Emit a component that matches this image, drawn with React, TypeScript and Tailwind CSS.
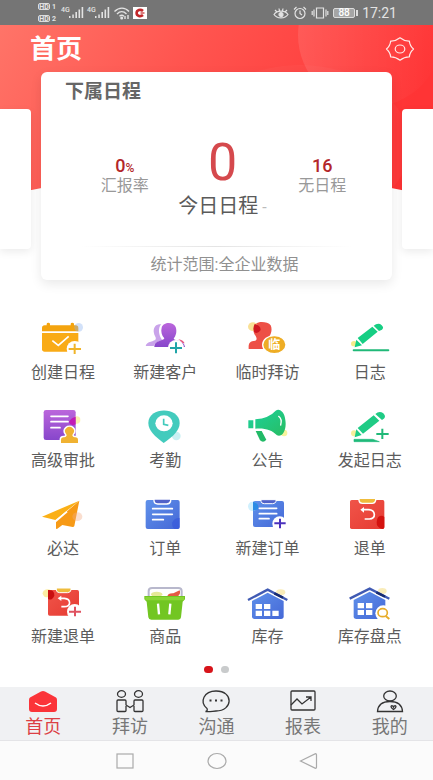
import type { ReactNode } from "react";

const FONT = "font-['Roboto','Noto_Sans_CJK_SC',sans-serif]";

function StatusBar() {
  return (
    <div className="flex h-[25px] items-center bg-[#757575] pr-9 pl-[38px] text-[#e3e3e3]">
      <div className="flex flex-col gap-[3px]">
        {["1", "2"].map((n) => (
          <div key={n} className="flex h-[9px] items-center gap-[2px] text-[8px] leading-[8px]">
            <span className="flex h-[7px] w-3 items-center justify-center rounded-[2px] border border-[#dcdcdc] text-[7px] font-bold">HD</span>
            <span className="w-[5px] text-[7px] font-bold">{n}</span>
          </div>
        ))}
      </div>
      {["a", "b"].map((k, i) => (
        <div key={k} className={i === 0 ? "ml-1 flex items-end" : "ml-[3px] flex items-end"}>
          <span className="mb-[5px] w-2 text-[7px] leading-[8px] font-medium">4G</span>
          <svg viewBox="0 0 15 13" className="h-[13px] w-[15px]" fill="currentColor">
            <path d="M0 10h1.500v2H0zM3.300 8.500h1.500V12h-1.500zM6.400 6h1.600v6h-1.600zM9.500 3.500h1.600V12h-1.600zM12.600 1h1.600v11h-1.600z" />
          </svg>
        </div>
      ))}
      <svg viewBox="0 0 18 14" className="ml-[3px] h-[14px] w-[18px]" fill="none" stroke="currentColor" strokeWidth="1.400">
        <path d="M1.500 5.500C6 1 12 1 16 5.500M4 8c3-3 6.500-3 9.500 0M6.500 10.200c1.500-1.400 3-1.400 4.500 0" />
        <circle cx="8.700" cy="12" r=".8" fill="currentColor" />
        <path d="M12 10v3M15 9v4" />
      </svg>
      <svg viewBox="0 0 14 12" className="ml-[2px] h-3 w-[14px]">
        <path d="M0 0h14v12H0z" fill="#fff" />
        <path d="M10 4C7.500 1.800 3.600 3 3.600 6S7.500 10.200 10 8" fill="none" stroke="#c3282b" strokeWidth="2.600" />
        <path d="M7.500 6h4" stroke="#c3282b" strokeWidth="1.200" />
      </svg>
      <div className="ml-auto flex items-center">
        <svg viewBox="0 0 16 14" className="h-[14px] w-4" fill="none" stroke="currentColor" strokeWidth="1.200">
          <path d="M1 8.500C4 4 12 4 15 8.500 12 13 4 13 1 8.500ZM2 4l2 2M6 2.500 6.500 5M10 2.500 9.500 5M14 4l-2 2" />
          <circle cx="8" cy="8.500" r="2" fill="currentColor" />
        </svg>
        <svg viewBox="0 0 14 14" className="ml-1 h-[14px] w-[14px]" fill="none" stroke="currentColor" strokeWidth="1.200">
          <circle cx="7" cy="7.500" r="5" />
          <path d="M7 4.500v3l2 1.500M1 3.500 3.500 1M13 3.500 10.500 1" />
        </svg>
        <svg viewBox="0 0 18 14" className="ml-1 h-[14px] w-[18px]" fill="none" stroke="currentColor" strokeWidth="1.200">
          <path d="M5.500 2h7v10h-7zM3 3.500v7M1.200 5v4M15 3.500v7M16.800 5v4" />
        </svg>
        <div className="ml-1 flex h-[10px] w-[22px] items-center justify-center rounded-[2px] border border-[#dcdcdc] bg-[#a5a5a5] text-[10px] leading-[10px] font-medium text-white">88</div>
        <div className="ml-px h-[6px] w-[2px] bg-[#dcdcdc]" />
        <span className="ml-1 text-sm leading-[18px]">17:21</span>
      </div>
    </div>
  );
}

function HeaderBackdrop() {
  return (
    <svg viewBox="0 0 433 175" preserveAspectRatio="none" className="absolute inset-x-0 top-0 h-[175px] w-full" aria-hidden="true">
      <defs>
        <linearGradient id="hero" x1="0" y1="0" x2="1" y2=".25">
          <stop offset="0" stopColor="#ff7468" />
          <stop offset=".45" stopColor="#ff544f" />
          <stop offset="1" stopColor="#ff3435" />
        </linearGradient>
        <linearGradient id="bubble" x1="0" y1="0" x2="1" y2="0">
          <stop offset="0" stopColor="#fff" stopOpacity=".1" />
          <stop offset="1" stopColor="#fff" stopOpacity="0" />
        </linearGradient>
        <clipPath id="arch">
          <path d="M0 0H433V172Q216 120 0 172Z" />
        </clipPath>
      </defs>
      <g clipPath="url(#arch)">
        <path d="M0 0h433v175H0z" fill="url(#hero)" />
        <circle cx="370" cy="10" r="72" fill="url(#bubble)" />
        <ellipse cx="300" cy="120" rx="110" ry="80" fill="#fff" opacity=".03" />
      </g>
    </svg>
  );
}

function SideCard({ side }: { side: "left" | "right" }) {
  return (
    <div
      className={
        side === "left"
          ? "mt-[37px] h-[140px] w-[31px] shrink-0 rounded-r-[4px] bg-white shadow-[0_3px_8px_rgba(0,0,0,0.08)]"
          : "mt-[37px] h-[140px] w-[31px] shrink-0 rounded-l-[4px] bg-white shadow-[0_3px_8px_rgba(0,0,0,0.08)]"
      }
    />
  );
}

function SummaryCard() {
  return (
    <section className="flex h-[208px] flex-1 flex-col rounded-[6px] bg-white shadow-[0_4px_12px_rgba(0,0,0,0.09)]">
      <h2 className="mt-2 ml-6 text-[19px] leading-6 font-bold text-[#666]">下属日程</h2>
      <div className="mt-[30px] grid grid-cols-[1fr_96px_1fr] px-9">
        <div className="flex flex-col items-center pt-[22px] pl-1">
          <p className="text-lg leading-5 font-medium text-[#b3262a]">
            0<span className="text-xs">%</span>
          </p>
          <p className="text-base leading-5 whitespace-nowrap text-[#999]">汇报率</p>
        </div>
        <div className="flex flex-col items-center pl-3">
          <p className="text-[52px] leading-[58px] text-[#d5494d]">0</p>
          <p className="text-xl leading-7 whitespace-nowrap text-[#5a5a5a]">
            今日日程<span className="ml-1 text-base text-[#bbb]">-</span>
          </p>
        </div>
        <div className="flex flex-col items-center pt-[22px] pl-6">
          <p className="text-lg leading-5 font-medium text-[#b3262a]">16</p>
          <p className="text-base leading-5 whitespace-nowrap text-[#999]">无日程</p>
        </div>
      </div>
      <div className="mx-10 mt-auto h-px bg-linear-to-r from-white via-[#e4e4e4] to-white" />
      <p className="pt-[6px] pb-[3px] pl-4 text-center text-base leading-6 text-[#909090]">统计范围:全企业数据</p>
    </section>
  );
}

type Tile = { label: string; box: string; art: ReactNode };

const tiles: Tile[] = [
  {
    label: "创建日程",
    box: "57 24 144 120",
    art: (
      <>
        <path d="M66 64V54q0-8 8-8h6v-4q0-4 5-4t5 4v4h62v-4q0-4 5-4t5 4v4h5q8 0 8 8v10Z" fill="#f4a40f" />
        <path d="M66 69h109v49q0 7-8 7H74q-8 0-8-7Z" fill="#f9ab16" />
        <circle cx="176" cy="52" r="13" fill="#8fb4ef" opacity=".4" />
        <path d="m97 92 18 14 31-27" fill="none" stroke="#fff" strokeWidth="5" />
        <circle cx="164" cy="117" r="24" fill="#fff" />
        <path d="M164 101v31M146 117h37" stroke="#f0b429" strokeWidth="6" />
      </>
    ),
  },
  {
    label: "新建客户",
    box: "364 24 144 120",
    art: (
      <>
        <path d="M418 43c-13 2-18 14-15 27 2 10 7 12 5 18-2 7-28 6-30 20h24c4-14 20-13 25-19-9-11-14-35-2-46Z" fill="#c9a3ea" />
        <path d="M404 111c-2-19 28-18 30-26-8-9-11-21-8-32 4-18 35-19 42-2 5 15 0 27-6 35 3 6 32 4 34 25Z" fill="url(#violet)" />
        <circle cx="469" cy="114" r="24" fill="#fff" />
        <path d="M476 88q14 2 19 12l-6-1q-6-6-13-11Z" fill="#e5547b" />
        <path d="M469 97v33M451 114h36" stroke="#20a5a8" strokeWidth="6" />
      </>
    ),
  },
  {
    label: "临时拜访",
    box: "71 24 144 120",
    art: (
      <>
        <path d="M85 117c-1-19 3-23 20-25 6-2 4-9 1-14-10-14-9-29 1-37 9-8 36-6 44 5 6 13 1 27-7 38-10 7-18 19-12 33Z" fill="#ed5046" />
        <ellipse cx="98" cy="50" rx="15" ry="13" fill="#f7d87a" opacity=".8" />
        <path d="M103 42q18 4 18 18-10 15-20 5-4-12 2-23Z" fill="#cf1720" />
        <ellipse cx="162" cy="104" rx="35" ry="27" fill="#eead25" stroke="#fff" strokeWidth="4" />
        <text x="162" y="117" textAnchor="middle" fill="#fff" fontSize="36" fontWeight="700">临</text>
      </>
    ),
  },
  {
    label: "日志",
    box: "378 24 144 120",
    art: (
      <>
        <ellipse cx="402" cy="101" rx="9" ry="8" fill="#f2e35a" opacity=".7" />
        <path d="m404 112 5-23 17 17ZM413 84l44-34 16 15-45 37ZM461 47l7-4q10-4 17 3 8 7 1 13l-9 4Z" fill="#16ce83" />
        <path d="M401 121h104" stroke="#20b978" strokeWidth="6" strokeLinecap="round" />
      </>
    ),
  },
  {
    label: "高级审批",
    box: "57 33 144 120",
    art: (
      <>
        <rect x="71" y="45" width="96" height="90" rx="7" fill="url(#violet)" />
        <circle cx="170" cy="75" r="11" fill="#f5e77c" opacity=".6" />
        <path d="M167 65v23q-15 8-20-6 5-14 20-17Z" fill="#c21ab5" />
        <path d="M93 64h51M93 80h51M93 98h27" stroke="#fff" strokeWidth="5" strokeLinecap="round" />
        <path d="M123 144v-9q0-8 8-8h2c7-3 9-6 5-11a14 12 0 1 1 21 0c-4 5-2 8 5 11h2q8 0 8 8v9Z" fill="#f0b232" stroke="#fff" strokeWidth="9" paintOrder="stroke" />
      </>
    ),
  },
  {
    label: "考勤",
    box: "364 33 144 120",
    art: (
      <>
        <circle cx="470" cy="123" r="13" fill="#b3e9ee" opacity=".7" />
        <path d="M432 144C405 124 386 106 386 84c0-50 94-50 94 0 0 22-19 40-48 60Z" fill="#43cbbd" />
        <ellipse cx="433" cy="85" rx="26" ry="24" fill="#fff" />
        <path d="M432 71v17l14 3" fill="none" stroke="#43cbbd" strokeWidth="5" />
      </>
    ),
  },
  {
    label: "公告",
    box: "71 33 144 120",
    art: (
      <>
        <circle cx="191" cy="114" r="10" fill="#f3ef73" opacity=".7" />
        <path d="M84 76h15v24H84ZM105 73q42-4 61-26c12-9 27 5 29 28 5 31-10 53-25 46-16-16-34-22-65-20Z" fill="url(#green)" />
        <path d="M106 108h18l14 26q-9 11-19 2Z" fill="#22ba67" />
        <path d="M175 64q11 8 6 26" fill="none" stroke="#fff" strokeWidth="4" strokeLinecap="round" />
      </>
    ),
  },
  {
    label: "发起日志",
    box: "378 33 144 120",
    art: (
      <>
        <circle cx="402" cy="115" r="9" fill="#f2e35a" opacity=".6" />
        <path d="m404 127 5-24 16 17ZM413 99l48-38 17 16-49 39ZM466 57q12-11 24-2 12 12-4 20Z" fill="#1fcb85" />
        <path d="M402 133h56l20 7h-76Z" fill="#20b978" stroke="#20bd80" strokeWidth="2" />
        <path d="M487 101v31M469 117h37" stroke="#20b978" strokeWidth="6" />
      </>
    ),
  },
  {
    label: "必达",
    box: "57 27 144 120",
    art: (
      <>
        <path d="m66 95 112-48-72 58Z" fill="#fbb016" />
        <path d="m178 47-70 61v21q0 4 4 2l15-11 31 6q4 0 5-3Z" fill="#f79a16" />
        <ellipse cx="172" cy="95" rx="15" ry="13" fill="#f3ad88" opacity=".4" />
        <path d="m107 109 34-29" stroke="#fff" strokeWidth="5" />
      </>
    ),
  },
  {
    label: "订单",
    box: "364 27 144 120",
    art: (
      <>
        <rect x="378" y="45" width="102" height="87" rx="6" fill="url(#blue)" />
        <path d="M403 42h50v6q-2 9-12 9h-27q-10 0-11-9Z" fill="#5262c8" stroke="#fff" strokeWidth="4" />
        <path d="M480 99v27q0 6-6 6h-9q-10-6-7-20 6-14 22-13Z" fill="#3658dc" opacity=".65" />
        <path d="M399 71h59M399 88h59M399 104h32" stroke="#fff" strokeWidth="5" strokeLinecap="round" />
      </>
    ),
  },
  {
    label: "新建订单",
    box: "71 27 144 120",
    art: (
      <>
        <rect x="98" y="48" width="93" height="78" rx="6" fill="url(#blue)" />
        <circle cx="97" cy="64" r="14" fill="#a9e3fb" opacity=".55" />
        <path d="M98 50q20 4 15 23l-15 4Z" fill="#2a8ce5" />
        <path d="M122 44h45v5q-2 7-10 7h-25q-9 0-10-7Z" fill="#5262c8" stroke="#fff" strokeWidth="3" />
        <path d="M117 70h52M117 86h52M117 101h29" stroke="#fff" strokeWidth="5" strokeLinecap="round" />
        <circle cx="178" cy="116" r="22" fill="#fff" />
        <path d="M179 101v29M162 115h34" stroke="#4b32bd" strokeWidth="6" />
      </>
    ),
  },
  {
    label: "退单",
    box: "378 27 144 120",
    art: (
      <>
        <rect x="390" y="45" width="103" height="87" rx="5" fill="url(#red)" />
        <path d="M417 40h50v6q-2 9-10 9h-30q-9 0-10-9Z" fill="#efbc3c" stroke="#fff" strokeWidth="4" />
        <path d="M480 93q8-2 13 3v30q0 6-6 6-18-4-17-20 1-16 10-19Z" fill="#d4120f" />
        <path d="M429 74h16c23 1 24 28 3 28h-14" fill="none" stroke="#fff" strokeWidth="5" />
        <path d="m432 66-11 8 11 9Z" fill="#fff" />
      </>
    ),
  },
  {
    label: "新建退单",
    box: "57 291 144 120",
    art: (
      <>
        <rect x="84" y="315" width="93" height="77" rx="5" fill="url(#red)" />
        <ellipse cx="83" cy="325" rx="15" ry="12" fill="#fae57d" opacity=".7" />
        <path d="M84 315q20-2 19 17-8 16-19 10Z" fill="#c90f10" />
        <path d="M109 309h44v6q-2 8-10 8h-24q-9 0-10-8Z" fill="#efbc3c" stroke="#fff" strokeWidth="3" />
        <path d="M121 340h12c21 2 21 25 0 25h-9" fill="none" stroke="#fff" strokeWidth="5" />
        <path d="m124 332-11 8 11 8Z" fill="#fff" />
        <circle cx="164" cy="380" r="23" fill="#fff" />
        <path d="M165 365v29M147 380h36" stroke="#df5260" strokeWidth="6" />
      </>
    ),
  },
  {
    label: "商品",
    box: "364 291 144 120",
    art: (
      <>
        <ellipse cx="411" cy="328" rx="17" ry="8" fill="#e6e997" />
        <path d="M443 334q2-10 18-9l19-9q4 10-5 18Z" fill="#e45a43" />
        <path d="M387 335v-17q0-9 10-9h79q10 0 10 9v17" fill="none" stroke="#b8b8cc" strokeWidth="6" />
        <path d="M374 333h122v10l-7 7-5 47q-1 7-8 7h-81q-8 0-9-7l-5-47-7-7Z" fill="#72c622" />
        <path d="M377 336h116v10H377Z" fill="#8ad536" />
        <path d="m415 356 3 32M452 356l-3 32" stroke="#fff" strokeWidth="7" />
      </>
    ),
  },
  {
    label: "库存",
    box: "71 291 144 120",
    art: (
      <>
        <path d="m95 348 47-25 48 25v46q0 8-8 8h-79q-8 0-8-8Z" fill="url(#blue)" />
        <ellipse cx="181" cy="322" rx="14" ry="9" fill="#f6e49b" opacity=".7" />
        <path d="m83 345 59-31 59 31" fill="none" stroke="#405ab3" strokeWidth="7" />
        <path d="m162 325 26 13" stroke="#172b72" strokeWidth="7" />
        <path d="M106 357h19v15h-19ZM131 357h19v15h-19ZM106 377h19v16h-19ZM131 377h19v16h-19ZM156 377h19v16h-19Z" fill="#fff" />
      </>
    ),
  },
  {
    label: "库存盘点",
    box: "378 291 144 120",
    art: (
      <>
        <path d="m401 345 48-25 47 25v49q0 8-8 8h-79q-8 0-8-8Z" fill="url(#blue)" />
        <ellipse cx="487" cy="318" rx="13" ry="9" fill="#f6e49b" opacity=".7" />
        <path d="m389 341 60-30 59 30" fill="none" stroke="#405ab3" strokeWidth="7" />
        <path d="m469 322 26 13" stroke="#172b72" strokeWidth="7" />
        <path d="M413 354h19v16h-19ZM438 354h19v16h-19ZM413 375h19v15h-19ZM438 375h19v15h-19Z" fill="#fff" />
        <circle cx="490" cy="385" r="24" fill="#fff" />
        <ellipse cx="488" cy="383" rx="14" ry="12" fill="none" stroke="#e7ac2a" strokeWidth="5" />
        <path d="m497 393 11 9" stroke="#e7ac2a" strokeWidth="6" />
      </>
    ),
  },
];

function Gradients() {
  return (
    <svg className="absolute h-0 w-0" aria-hidden="true">
      <defs>
        <linearGradient id="violet" x1="0" y1="0" x2="0" y2="1">
          <stop stopColor="#bb66dc" />
          <stop offset="1" stopColor="#8746cb" />
        </linearGradient>
        <linearGradient id="green" x1="0" y1="0" x2="1" y2="1">
          <stop stopColor="#1bd29d" />
          <stop offset="1" stopColor="#28bd63" />
        </linearGradient>
        <linearGradient id="blue" x1="0" y1="0" x2="1" y2="1">
          <stop stopColor="#5f91ea" />
          <stop offset="1" stopColor="#4568d7" />
        </linearGradient>
        <linearGradient id="red" x1="0" y1="0" x2="1" y2="1">
          <stop stopColor="#f05449" />
          <stop offset="1" stopColor="#e63b32" />
        </linearGradient>
      </defs>
    </svg>
  );
}

const tabs: Tile[] = [
  {
    label: "首页",
    box: "0 0 32 24",
    art: (
      <>
        <path d="m14 2.500-11 6Q2 9 2 11v9q0 3 3 3h22q3 0 3-3v-9q0-2-1-2.500l-11-6q-2-1-4 0Z" fill="#fb3439" />
        <path d="M8 14q8 6 16 0" fill="none" stroke="#fff" strokeWidth="1.500" />
      </>
    ),
  },
  {
    label: "拜访",
    box: "0 0 32 24",
    art: (
      <>
        <ellipse cx="7.500" cy="5" rx="4" ry="3.300" />
        <ellipse cx="24.500" cy="5" rx="4" ry="3.300" />
        <path d="M12 17v4.500q0 1-1 1H4q-1 0-1-1V12q0-1 1-1h7q1 0 1 1v4l4 2.500 4-2.500v-4q0-1 1-1h7q1 0 1 1v9.500q0 1-1 1h-7q-1 0-1-1V17" />
      </>
    ),
  },
  {
    label: "沟通",
    box: "0 0 32 24",
    art: (
      <>
        <path d="M5.500 22.500c2-.3 2-2 1.500-3C-1 13 4 2 16 2c18 0 17 20 0 20-3 0-6 1-10.500.5Z" />
        <path d="M9.500 11.500h2M15 11.500h2M20.500 11.500h2" strokeWidth="2" />
      </>
    ),
  },
  {
    label: "报表",
    box: "0 0 32 24",
    art: (
      <>
        <rect x="4" y="2" width="24" height="19" rx="1" />
        <path d="m4 16 6-6 5 5 9-7M19 8h5v4" />
      </>
    ),
  },
  {
    label: "我的",
    box: "0 0 32 24",
    art: (
      <>
        <ellipse cx="16" cy="7" rx="6.300" ry="5" />
        <path d="M3.500 22.500C4 15 9 12.500 16 12.500s12 2.500 12.500 10Z" />
        <path d="M19.500 20.500c-5-3.500-1-5 0-2.500 1-2.500 5-1 0 2.500Z" />
      </>
    ),
  },
];

function TabBar() {
  return (
    <nav className="grid h-[54px] grid-cols-5 border-b border-[#e4e4e7] bg-[#f0f1f3]">
      {tabs.map((t, i) => (
        <button key={t.label} type="button" className={i === 0 ? "flex flex-col items-center gap-px pt-[2px] text-[#dc3f44]" : "flex flex-col items-center gap-px pt-[2px] text-[#777]"}>
          <svg viewBox={t.box} className="h-6 w-8" fill="none" stroke={i === 0 ? "none" : "#333"} strokeWidth="1.300">
            {t.art}
          </svg>
          <span className="text-lg leading-[26px]">{t.label}</span>
        </button>
      ))}
    </nav>
  );
}

export default function App() {
  return (
    <div className={`${FONT} min-h-screen overflow-hidden bg-white`}>
      <Gradients />
      <StatusBar />
      <header className="relative">
        <HeaderBackdrop />
        <div className="relative">
          <div className="flex h-[47px] items-center justify-between pr-[18px] pl-[30px]">
            <h1 className="text-[26px] leading-8 font-bold text-white">首页</h1>
            <button type="button" aria-label="设置" className="text-[#ffe9e7]">
              <svg viewBox="0 0 30 26" className="h-[26px] w-[30px]" fill="none" stroke="currentColor" strokeWidth="1.200" strokeLinejoin="round">
                <path d="M15 1.800Q19.500 5.400 24.400 5.200 24.600 9.400 28.500 13 24.600 16.600 24.400 20.800 19.500 20.600 15 24.200 10.500 20.600 5.600 20.800 5.400 16.600 1.500 13 5.400 9.400 5.600 5.200 10.500 5.400 15 1.800Z" />
                <ellipse cx="15" cy="13" rx="4.800" ry="4" />
              </svg>
            </button>
          </div>
          <div className="flex items-start gap-[10px]">
            <SideCard side="left" />
            <SummaryCard />
            <SideCard side="right" />
          </div>
        </div>
      </header>
      <main>
        <div className="mt-[38px] grid grid-cols-4 gap-y-[21px] px-3">
          {tiles.map((t) => (
            <button key={t.label} type="button" className="flex flex-col items-center gap-[3px] text-[#5c5c5c]">
              <svg viewBox={t.box} className="h-10 w-12">
                {t.art}
              </svg>
              <span className="text-base leading-6">{t.label}</span>
            </button>
          ))}
        </div>
        <div className="flex h-[38px] items-center justify-center gap-2 pt-[2px]">
          <button type="button" aria-label="第一页" className="h-[7px] w-[9px] rounded-full bg-[#d7141a]" />
          <button type="button" aria-label="第二页" className="h-[7px] w-[8px] rounded-full bg-[#c9cbcc]" />
        </div>
      </main>
      <TabBar />
      <div className="flex h-[39px] items-center justify-center gap-[72px] bg-[#fbfbfb] text-[#aaa]">
        <button type="button" aria-label="最近任务">
          <svg viewBox="0 0 20 18" className="h-[18px] w-5" fill="none" stroke="currentColor" strokeWidth="1.200">
            <rect x="2" y="2" width="16" height="14" />
          </svg>
        </button>
        <button type="button" aria-label="主屏幕">
          <svg viewBox="0 0 20 18" className="h-[18px] w-5" fill="none" stroke="currentColor" strokeWidth="1.200">
            <ellipse cx="10" cy="9" rx="9" ry="7.500" />
          </svg>
        </button>
        <button type="button" aria-label="返回">
          <svg viewBox="0 0 20 18" className="h-[18px] w-5" fill="none" stroke="currentColor" strokeWidth="1.200">
            <path d="m1.500 9 15-7.300q1 0 1 1v12.600q0 1-1 1Z" />
          </svg>
        </button>
      </div>
    </div>
  );
}
